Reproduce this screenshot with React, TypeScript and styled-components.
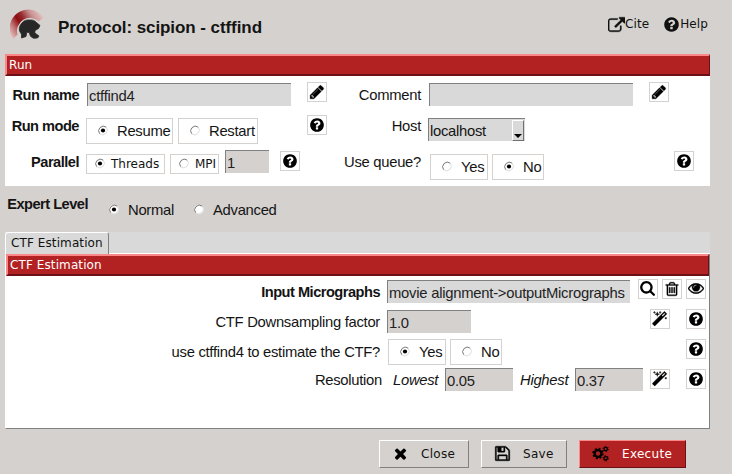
import React from "react";
import styled, { createGlobalStyle, css } from "styled-components";

const sans = `"Liberation Sans", Arial, sans-serif`;
const ui = `"DejaVu Sans", Verdana, sans-serif`;

const GlobalStyle = createGlobalStyle`
  * { box-sizing: border-box; }
  body { margin: 0; background: #d5d1ce; overflow: hidden; }
  input, button { margin: 0; padding: 0; border-radius: 0; }
`;

const Window = styled.main`
  display: flex;
  flex-direction: column;
  width: 732px;
  height: 474px;
  padding-left: 5px;
  background: #d5d1ce;
  color: #141414;
  font: 14.8px/20px ${sans};
  letter-spacing: -0.28px;
`;

const Header = styled.header`
  display: flex;
  align-items: flex-start;
  height: 54px;
  padding: 9px 24px 0 5px;
`;

const Title = styled.h1`
  flex: 1;
  margin: 9px 0 0 13px;
  font: bold 17px/20px ${sans};
  letter-spacing: -0.07px;
`;

const HeaderLink = styled.a<{ $gap: number }>`
  display: flex;
  align-items: center;
  margin: 6px 0 0 ${(p) => p.$gap}px;
  font: 12px/18px ${ui};
  letter-spacing: 0.1px;
  color: #111;
`;

const Banner = styled.h2`
  height: 22px;
  margin: 0;
  padding-left: 2px;
  border: solid;
  border-width: 2px 1px 2px 2px;
  border-color: #fb8888 #6b1014 #6b1014 #fb8888;
  background: #b22222;
  color: #fff;
  font: 12px/19px ${ui};
  letter-spacing: 0.1px;
`;

const RunPanel = styled.section`
  width: 705px;
  height: 132px;
  background: #fff;
`;

const RunGrid = styled.div`
  display: grid;
  grid-template-columns: 337px 368px;
  grid-template-rows: 33px 36px 36px;
  padding-top: 6px;
`;

const Row = styled.div<{ $h?: number }>`
  display: flex;
  align-items: flex-start;
  height: ${(p) => (p.$h ? p.$h + "px" : "auto")};
`;

const Label = styled.label<{ $w: number; $bold?: boolean; $top?: number }>`
  flex: none;
  width: ${(p) => p.$w}px;
  margin-top: ${(p) => p.$top ?? 3}px;
  text-align: right;
  white-space: nowrap;
  ${(p) =>
    p.$bold &&
    css`
      font-size: 14.6px;
      font-weight: bold;
      letter-spacing: -0.5px;
    `}
`;

const Hint = styled.em<{ $left: number; $w: number }>`
  flex: none;
  width: ${(p) => p.$w}px;
  margin: 1px 0 0 ${(p) => p.$left}px;
  white-space: nowrap;
`;

const Field = styled.input<{ $w: number; $left?: number; $top?: number; $tone?: string }>`
  flex: none;
  width: ${(p) => p.$w}px;
  height: 23px;
  margin: ${(p) => p.$top ?? 1}px 0 0 ${(p) => p.$left ?? 0}px;
  padding: 2px 0 0 1px;
  border: solid #808080;
  border-width: 1px 0 0 1px;
  outline: none;
  background: ${(p) => p.$tone ?? "#d5d1ce"};
  color: #222;
  font: 14.8px/20px ${sans};
  letter-spacing: -0.24px;
`;

const Combo = styled.div`
  display: flex;
  width: 97px;
  height: 23px;
  margin: 3px 0 0 7px;
  padding-left: 1px;
  border: solid #808080;
  border-width: 1px 0 0 1px;
  background: #d9d9d9;
  line-height: 24px;
`;

const ComboArrow = styled.span`
  display: flex;
  align-items: flex-end;
  justify-content: center;
  width: 12px;
  height: 21px;
  margin: 1px 1px 0 auto;
  padding-bottom: 2px;
  border: solid;
  border-width: 1px;
  border-color: #fff #707070 #707070 #fff;
  background: #d9d9d9;
`;

const Choice = styled.label<{ $w: number; $left?: number; $top?: number; $small?: boolean; $bare?: boolean }>`
  display: flex;
  flex: none;
  align-items: center;
  width: ${(p) => p.$w}px;
  height: ${(p) => (p.$small ? 20 : 26)}px;
  margin: ${(p) => p.$top ?? 0}px 0 0 ${(p) => p.$left ?? 0}px;
  padding-left: ${(p) => (p.$small ? 8 : 11)}px;
  border: 1px solid #d5d1ce;
  background: ${(p) => (p.$bare ? "transparent" : "#fff")};
  white-space: nowrap;
  ${(p) => p.$small && css`font: 12px/18px ${ui}; letter-spacing: 0;`}
`;

const ChoiceText = styled.span<{ $gap: number }>`
  margin-left: ${(p) => p.$gap}px;
`;

const Dot = styled.svg`
  flex: none;
  width: 11px;
  height: 11px;
  margin-bottom: 1px;
`;

const IconBox = styled.button<{ $left?: number; $top?: number }>`
  display: flex;
  flex: none;
  align-items: center;
  justify-content: center;
  width: 20px;
  height: 20px;
  margin: ${(p) => p.$top ?? 0}px 0 0 ${(p) => p.$left ?? 0}px;
  border: 1px solid #d5d1ce;
  background: #fff;
  color: #000;
`;

const ExpertRow = styled.div`
  display: flex;
  height: 46px;
  padding: 8px 0 0 2px;
`;

const TabBar = styled.nav`
  width: 705px;
  height: 22px;
  border-bottom: 1px solid #fff;
  background: #d9d9d9;
`;

const Tab = styled.div`
  width: 104px;
  height: 22px;
  padding-left: 5px;
  border: solid;
  border-width: 1px 1px 0;
  border-color: #fff #808080 #fff #fff;
  border-radius: 3px 3px 0 0;
  background: #d9d9d9;
  color: #111;
  font: 12px/20px ${ui};
  letter-spacing: 0.1px;
`;

const CtfPanel = styled.section`
  width: 705px;
  height: 175px;
  border: solid;
  border-width: 0 1px 1px;
  border-color: #fff #808080 #808080 #fff;
  background: #fff;
`;

const CtfRows = styled.div`
  padding-top: 3px;
`;

const Spacer = styled.span`
  flex: 1;
`;

const Tools = styled.div`
  display: flex;
  margin-right: 3px;
`;

const Footer = styled.footer`
  display: flex;
  gap: 12px;
  margin: 11px 0 0 374px;
`;

const Action = styled.button<{ $w: number; $primary?: boolean }>`
  display: flex;
  align-items: center;
  width: ${(p) => p.$w}px;
  height: 28px;
  padding-left: 12px;
  border: 1px solid;
  border-color: ${(p) => (p.$primary ? "#fb8888 #6b1014 #6b1014 #fb8888" : "#fff #808080 #808080 #fff")};
  background: ${(p) => (p.$primary ? "#b22222" : "#d5d1ce")};
  color: ${(p) => (p.$primary ? "#fff" : "#111")};
  font: 12px/18px ${ui};
  letter-spacing: 0.3px;
  svg { color: #000; margin-bottom: 1px; }
`;

const ActionText = styled.span<{ $gap: number }>`
  margin-left: ${(p) => p.$gap}px;
`;

const shapes = {
  help: "M1024 1376v-192q0-14-9-23t-23-9h-192q-14 0-23 9t-9 23v192q0 14 9 23t23 9h192q14 0 23-9t9-23zm256-672q0-88-55.5-163t-138.5-116-170-41q-243 0-371 213-15 24 8 42l132 100q7 6 19 6 16 0 25-12 53-68 86-92 34-24 86-24 48 0 85.5 26t37.5 59q0 38-20 61t-68 45q-63 28-115.5 86.5t-52.5 125.5v36q0 14 9 23t23 9h192q14 0 23-9t9-23q0-19 21.5-49.5t54.5-49.5q32-18 49-28.5t46-35 44.5-48 28-60.5 12.5-81zm384 192q0 209-103 385.5t-279.5 279.5-385.5 103-385.5-103-279.5-279.5-103-385.5 103-385.5 279.5-279.5 385.5-103 385.5 103 279.5 279.5 103 385.5z",
  pencil: "M491 1536l91-91-235-235-91 91v107h128v128h107zm523-928q0-22-22-22-10 0-17 7l-542 542q-7 7-7 17 0 22 22 22 10 0 17-7l542-542q7-7 7-17zm-54-192l416 416-832 832h-416v-416zm683 96q0 53-37 90l-166 166-416-416 166-165q36-38 90-38 53 0 91 38l235 234q37 39 37 91z",
  search: "M1216 832q0-185-131.5-316.5t-316.5-131.5-316.5 131.5-131.5 316.5 131.5 316.5 316.5 131.5 316.5-131.5 131.5-316.5zm512 832q0 52-38 90t-90 38q-54 0-90-38l-343-342q-179 124-399 124-143 0-273.5-55.5t-225-150-150-225-55.5-273.5 55.5-273.5 150-225 225-150 273.5-55.5 273.5 55.5 225 150 150 225 55.5 273.5q0 220-124 399l343 343q37 37 37 90z",
  trash: "M704 736v576q0 14-9 23t-23 9h-64q-14 0-23-9t-9-23v-576q0-14 9-23t23-9h64q14 0 23 9t9 23zm256 0v576q0 14-9 23t-23 9h-64q-14 0-23-9t-9-23v-576q0-14 9-23t23-9h64q14 0 23 9t9 23zm256 0v576q0 14-9 23t-23 9h-64q-14 0-23-9t-9-23v-576q0-14 9-23t23-9h64q14 0 23 9t9 23zm128 724v-948h-896v948q0 22 7 40.5t14.5 27 10.5 8.5h832q3 0 10.5-8.5t14.5-27 7-40.5zm-672-1076h448l-48-117q-7-9-17-11h-317q-10 2-17 11zm928 32v64q0 14-9 23t-23 9h-96v948q0 83-47 143.5t-113 60.5h-832q-66 0-113-58.5t-47-141.5v-952h-96q-14 0-23-9t-9-23v-64q0-14 9-23t23-9h309l70-167q15-37 54-63t79-26h320q40 0 79 26t54 63l70 167h309q14 0 23 9t9 23z",
  eye: "M1664 960q-152-236-381-353 61 104 61 225 0 185-131.5 316.5t-316.5 131.5-316.5-131.5-131.5-316.5q0-121 61-225-229 117-381 353 133 205 333.5 326.5t434.5 121.5 434.5-121.5 333.5-326.5zm-720-384q0-20-14-34t-34-14q-125 0-214.5 89.5t-89.5 214.5q0 20 14 34t34 14 34-14 14-34q0-86 61-147t147-61q20 0 34-14t14-34zm848 384q0 34-20 69-140 230-376.5 368.5t-499.5 138.5-499.5-139-376.5-368q-20-35-20-69t20-69q140-229 376.5-368t499.5-139 499.5 139 376.5 368q20 35 20 69z",
  magic: "M1254 581l293-293-107-107-293 293zm447-293q0 27-18 45l-1286 1286q-18 18-45 18t-45-18l-198-198q-18-18-18-45t18-45l1286-1286q18-18 45-18t45 18l198 198q18 18 18 45zm-1351-190l98 30-98 30-30 98-30-98-98-30 98-30 30-98zm350 162l196 60-196 60-60 196-60-196-196-60 196-60 60-196zm930 478l98 30-98 30-30 98-30-98-98-30 98-30 30-98zm-640-640l98 30-98 30-30 98-30-98-98-30 98-30 30-98z",
  times: "M1490 1322q0 40-28 68l-136 136q-28 28-68 28t-68-28l-294-294-294 294q-28 28-68 28t-68-28l-136-136q-28-28-28-68t28-68l294-294-294-294q-28-28-28-68t28-68l136-136q28-28 68-28t68 28l294 294 294-294q28-28 68-28t68 28l136 136q28 28 28 68t-28 68l-294 294 294 294q28 28 28 68z",
  save: "M512 1536h768v-384h-768v384zm896 0h128v-896q0-14-10-38.5t-20-34.5l-281-281q-10-10-34-20t-39-10v416q0 40-28 68t-68 28h-576q-40 0-68-28t-28-68v-416h-128v1280h128v-416q0-40 28-68t68-28h832q40 0 68 28t28 68v416zm-384-928v-320q0-13-9.5-22.5t-22.5-9.5h-192q-13 0-22.5 9.5t-9.5 22.5v320q0 13 9.5 22.5t22.5 9.5h192q13 0 22.5-9.5t9.5-22.5zm640 32v928q0 40-28 68t-68 28h-1344q-40 0-68-28t-28-68v-1344q0-40 28-68t68-28h928q40 0 88 20t76 48l280 280q28 28 48 76t20 88z",
  external: "M1408 928v320q0 119-84.5 203.5t-203.5 84.5h-832q-119 0-203.5-84.5t-84.5-203.5v-832q0-119 84.5-203.5t203.5-84.5h704q14 0 23 9t9 23v64q0 14-9 23t-23 9h-704q-66 0-113 47t-47 113v832q0 66 47 113t113 47h832q66 0 113-47t47-113v-320q0-14 9-23t23-9h64q14 0 23 9t9 23zm384-864v512q0 26-19 45t-45 19-45-19l-176-176-652 652q-10 10-23 10t-23-10l-114-114q-10-10-10-23t10-23l652-652-176-176q-19-19-19-45t19-45 45-19h512q26 0 45 19t19 45z",
};

const boxes: Partial<Record<keyof typeof shapes, string>> = {
  search: "50 120 1792 1792",
  magic: "50 -30 1792 1792",
  eye: "0 120 1792 1792",
  external: "0 -128 1792 1792",
};

const heavy = ["external", "magic", "eye", "trash", "save", "pencil"];

function Glyph({ name, size = 16 }: { name: keyof typeof shapes; size?: number }) {
  return (
    <svg width={size} height={size} viewBox={boxes[name] ?? "0 0 1792 1792"} fill="currentColor">
      <path d={shapes[name]} stroke="currentColor" strokeWidth={heavy.includes(name) ? 40 : 0} />
    </svg>
  );
}

function Tool({ name, left, top, size = 16 }: { name: keyof typeof shapes; left?: number; top?: number; size?: number }) {
  return (
    <IconBox $left={left} $top={top} aria-label={name}>
      <Glyph name={name} size={size} />
    </IconBox>
  );
}

function Radio({ on }: { on?: boolean }) {
  return (
    <Dot viewBox="0 0 11 11">
      <circle cx="5" cy="5.5" r="4.7" fill="#fff" />
      <path d="M1.7 8.8A4.7 4.7 0 0 1 8.3 2.2" fill="none" stroke="#777" strokeWidth="1" />
      <path d="M8.3 2.2A4.7 4.7 0 0 1 1.7 8.8" fill="none" stroke="#ddd" strokeWidth="1" />
      {on && <circle cx="5" cy="5.5" r="2.1" fill="#000" />}
    </Dot>
  );
}

function Gears() {
  return (
    <svg width="17" height="17" viewBox="0 0 17 17" fill="none" stroke="#000">
      <circle cx="6" cy="8.5" r="3.4" strokeWidth="2.4" />
      <circle cx="6" cy="8.5" r="5" strokeWidth="1.4" strokeDasharray="2 1.927" />
      <circle cx="13.7" cy="4" r="1.7" strokeWidth="1.3" />
      <circle cx="13.7" cy="4" r="2.7" strokeWidth="1" strokeDasharray="1.2 1.63" />
      <circle cx="13.7" cy="13.3" r="1.7" strokeWidth="1.3" />
      <circle cx="13.7" cy="13.3" r="2.7" strokeWidth="1" strokeDasharray="1.2 1.63" />
    </svg>
  );
}

function Logo() {
  return (
    <svg width="35" height="32" viewBox="0 0 35 32">
      <defs>
        <linearGradient id="crest" gradientUnits="userSpaceOnUse" x1="2" y1="29" x2="33" y2="9">
          <stop offset="0" stopColor="#e6c4c2" />
          <stop offset="0.2" stopColor="#c07474" />
          <stop offset="0.4" stopColor="#8c0c10" />
          <stop offset="0.55" stopColor="#95292b" />
          <stop offset="0.78" stopColor="#c79090" />
          <stop offset="1" stopColor="#e0bebc" />
        </linearGradient>
      </defs>
      <path d="M3 30A18 18 0 0 1 33.5 8.5L29 12.5A13 13 0 0 0 7.5 25.5Z" fill="url(#crest)" />
      <path d="M11.5 29L11.5 25C8.5 22 8.6 17.5 12 14C13.5 11.5 17 10.6 19.5 11C22 10.6 25 11.5 26.5 13.5L30 16.5L28.5 19.5L25 21.5L24.8 24L29 27L27.5 29L23.5 29.3L20.5 27.3L19.2 23.5L16.8 23.3L16 27.5Z" fill="#272727" stroke="#272727" strokeWidth="0.8" strokeLinejoin="round" />
    </svg>
  );
}

export default function App() {
  return (
    <>
      <GlobalStyle />
      <Window>
        <Header>
          <Logo />
          <Title>Protocol: scipion - ctffind</Title>
          <HeaderLink $gap={0}><Glyph name="external" size={17} />Cite</HeaderLink>
          <HeaderLink $gap={14}><Glyph name="help" size={17} />Help</HeaderLink>
        </Header>

        <RunPanel>
          <Banner>Run</Banner>
          <RunGrid>
            <Row>
              <Label $w={74} $bold>Run name</Label>
              <Field $w={204} $left={8} $tone="#d9d9d9" defaultValue="ctffind4" />
              <Tool name="pencil" left={16} />
            </Row>
            <Row>
              <Label $w={79}>Comment</Label>
              <Field $w={204} $left={8} $tone="#d9d9d9" />
              <Tool name="pencil" left={16} />
            </Row>
            <Row>
              <Label $w={74} $bold $top={1}>Run mode</Label>
              <Choice $w={87} $left={7} $top={3}><Radio on /><ChoiceText $gap={8}>Resume</ChoiceText></Choice>
              <Choice $w={80} $left={5} $top={3}><Radio /><ChoiceText $gap={8}>Restart</ChoiceText></Choice>
              <Tool name="help" left={49} />
            </Row>
            <Row>
              <Label $w={79} $top={1}>Host</Label>
              <Combo>
                localhost
                <ComboArrow>
                  <svg width="8" height="4" viewBox="0 0 8 4"><path d="M0 0H8L4 4Z" /></svg>
                </ComboArrow>
              </Combo>
            </Row>
            <Row>
              <Label $w={74} $bold $top={1}>Parallel</Label>
              <Choice $w={79} $left={7} $top={3} $small><Radio on /><ChoiceText $gap={5}>Threads</ChoiceText></Choice>
              <Choice $w={49} $left={5} $top={3} $small><Radio /><ChoiceText $gap={5}>MPI</ChoiceText></Choice>
              <Field $w={44} $left={6} $top={-1} defaultValue="1" />
              <Tool name="help" left={11} />
            </Row>
            <Row>
              <Label $w={79} $top={1}>Use queue?</Label>
              <Choice $w={58} $left={9} $top={3}><Radio /><ChoiceText $gap={8}>Yes</ChoiceText></Choice>
              <Choice $w={52} $left={4} $top={3}><Radio on /><ChoiceText $gap={8}>No</ChoiceText></Choice>
              <Tool name="help" left={130} />
            </Row>
          </RunGrid>
        </RunPanel>

        <ExpertRow>
          <Label $w={81} $bold $top={0}>Expert Level</Label>
          <Choice $bare $w={80} $left={9} $top={3}><Radio on /><ChoiceText $gap={8}>Normal</ChoiceText></Choice>
          <Choice $bare $w={90} $left={5} $top={3}><Radio /><ChoiceText $gap={8}>Advanced</ChoiceText></Choice>
        </ExpertRow>

        <TabBar><Tab>CTF Estimation</Tab></TabBar>
        <CtfPanel>
          <Banner>CTF Estimation</Banner>
          <CtfRows>
            <Row $h={30}>
              <Label $w={374} $bold>Input Micrographs</Label>
              <Field $w={243} $left={7} $tone="#d9d9d9" defaultValue="movie alignment->outputMicrographs" />
              <Spacer />
              <Tools><Tool name="search" /><Tool name="trash" left={4} /><Tool name="eye" left={4} /></Tools>
            </Row>
            <Row $h={30}>
              <Label $w={374}>CTF Downsampling factor</Label>
              <Field $w={84} $left={7} defaultValue="1.0" />
              <Spacer />
              <Tools><Tool name="magic" /><Tool name="help" left={16} /></Tools>
            </Row>
            <Row $h={30}>
              <Label $w={374}>use ctffind4 to estimate the CTF?</Label>
              <Choice $w={58} $left={8}><Radio on /><ChoiceText $gap={8}>Yes</ChoiceText></Choice>
              <Choice $w={52} $left={4}><Radio /><ChoiceText $gap={8}>No</ChoiceText></Choice>
              <Spacer />
              <Tools><Tool name="help" /></Tools>
            </Row>
            <Row $h={30}>
              <Label $w={376} $top={1}>Resolution</Label>
              <Hint $left={11} $w={45}>Lowest</Hint>
              <Field $w={68} $left={7} $top={-1} defaultValue="0.05" />
              <Hint $left={7} $w={48}>Highest</Hint>
              <Field $w={68} $left={7} $top={-1} defaultValue="0.37" />
              <Spacer />
              <Tools><Tool name="magic" /><Tool name="help" left={16} /></Tools>
            </Row>
          </CtfRows>
        </CtfPanel>

        <Footer>
          <Action $w={90}><Glyph name="times" size={17} /><ActionText $gap={12}>Close</ActionText></Action>
          <Action $w={86}><Glyph name="save" size={17} /><ActionText $gap={12}>Save</ActionText></Action>
          <Action $w={107} $primary><Gears /><ActionText $gap={13}>Execute</ActionText></Action>
        </Footer>
      </Window>
    </>
  );
}
